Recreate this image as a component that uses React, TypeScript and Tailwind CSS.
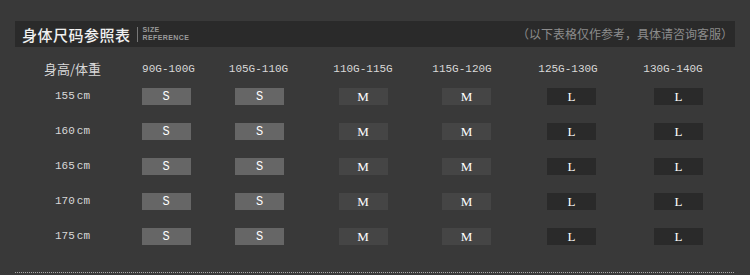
import React from 'react';

const weights = ['90G-100G', '105G-110G', '110G-115G', '115G-120G', '125G-130G', '130G-140G'];
const heights = ['155', '160', '165', '170', '175'];

// column widths chosen so centres line up with the reference boxes
const colW = ['w-[102px]', 'w-[85px]', 'w-[122px]', 'w-[85px]', 'w-[125px]', 'w-[89px]'];
const headShift = ['pl-[5px]', 'pr-[2px]', '', 'pr-[9px]', 'pr-[7px]', 'pr-[11px]'];
const sizes = ['S', 'S', 'M', 'M', 'L', 'L'];
const boxBg: Record<string, string> = {
  S: 'bg-[#666666]',
  M: 'bg-[#454545]',
  L: 'bg-[#2a2a2a]',
};

const mono = { fontFamily: '"Liberation Mono", "DejaVu Sans Mono", monospace' };
const serif = { fontFamily: '"Liberation Serif", "DejaVu Serif", serif' };
const cjk = { fontFamily: '"Noto Sans CJK SC", "Noto Sans", sans-serif' };

const App: React.FC = () => {
  return (
    <div className="w-[750px] h-[275px] bg-[#393939] pt-[21px] px-[15px] overflow-hidden">
      {/* Header bar */}
      <div className="h-[26px] bg-[#2a2a2a] flex items-center justify-between pl-[7px] pr-[2px]">
        <div className="flex items-center">
          <span className="text-[15px] font-medium text-[#f0f0f0] leading-none tracking-[0.5px]" style={cjk}>
            身体尺码参照表
          </span>
          <span className="ml-[6px] w-px h-[15px] bg-[#777777]" />
          <div
            className="ml-[5px] flex flex-col text-[7px] font-bold text-[#9a9a9a] leading-[8px] tracking-[0.4px]"
            style={{ fontFamily: '"Liberation Sans", Arial, sans-serif' }}
          >
            <span>SIZE</span>
            <span>REFERENCE</span>
          </div>
        </div>
        <span className="text-[12px] text-[#8c8c8c] leading-none" style={cjk}>
          （以下表格仅作参考，具体请咨询客服）
        </span>
      </div>

      {/* Table */}
      <div className="pl-[15px] mt-[12px]">
        <div className="flex h-[20px] items-center text-[#d8d8d8]">
          <div className="w-[85px] text-center text-[13px]" style={cjk}>
            身高/体重
          </div>
          {weights.map((w, i) => (
            <div key={w} className={`${colW[i]} ${headShift[i]} text-center text-[11px]`} style={mono}>
              {w}
            </div>
          ))}
        </div>

        {heights.map((h) => (
          <div key={h} className="flex h-[35px] items-center">
            <div className="w-[85px] text-center text-[11px] text-[#d8d8d8]" style={mono}>
              {h}
              <span className="ml-[2px]">cm</span>
            </div>
            {sizes.map((s, i) => (
              <div key={i} className={`${colW[i]} flex justify-center`}>
                <div
                  className={`w-[49px] h-[17px] ${boxBg[s]} flex items-center justify-center text-white leading-none ${
                    s === 'S' ? 'text-[12px]' : 'text-[13px]'
                  }`}
                  style={s === 'S' ? mono : serif}
                >
                  {s}
                </div>
              </div>
            ))}
          </div>
        ))}
      </div>

      {/* Dotted rule */}
      <div className="mt-[18px] w-[719px] border-t border-dotted border-[#a8a8a8]" />
    </div>
  );
};

export default App;
